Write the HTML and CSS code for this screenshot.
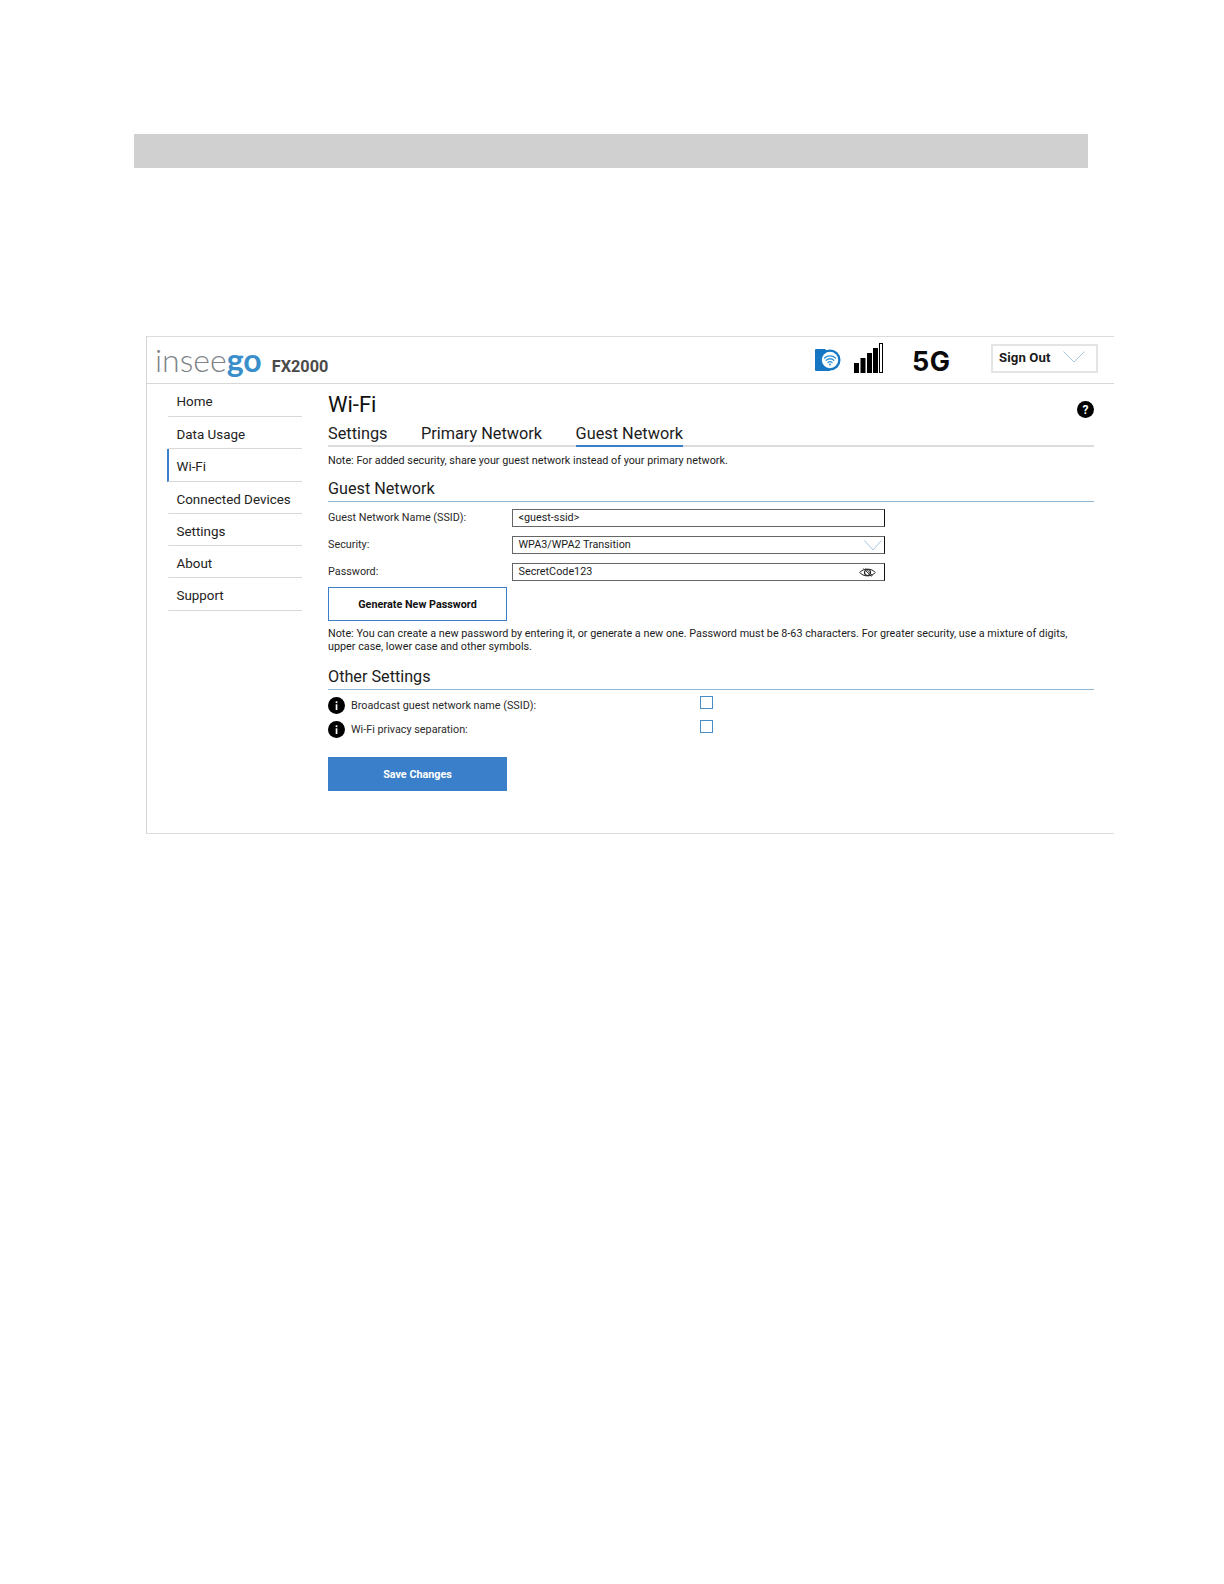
FILE: index.html
```html
<!DOCTYPE html>
<html lang="en">
<head>
<meta charset="utf-8">
<title>Wi-Fi Guest Network</title>
<link rel="stylesheet" href="styles.css">
</head>
<body>
<div class="page">
  <div class="graybar"></div>
  <div class="panel">
    <header class="topbar">
      <div class="logo"><span class="logo-a">insee</span><span class="logo-b">go</span></div>
      <div class="model">FX2000</div>
      <div class="status">
        <svg class="ic-wifi" width="27" height="24" viewBox="0 0 27 24">
          <path d="M0 2a1 1 0 0 1 1-1h9l2 2h3v20H1a1 1 0 0 1-1-1z" fill="#1577c4"/>
          <circle cx="15" cy="12" r="10.5" fill="#1577c4"/>
          <circle cx="15" cy="12" r="8.2" fill="#fff"/>
          <g fill="none" stroke="#2a8fd8" stroke-width="1.3" stroke-linecap="round">
            <path d="M9.5 10a8 8 0 0 1 11 0"/>
            <path d="M11.2 12.3a5.4 5.4 0 0 1 7.6 0"/>
            <path d="M13 14.5a2.8 2.8 0 0 1 4 0"/>
          </g>
          <circle cx="15" cy="16.6" r="1" fill="#2a8fd8"/>
        </svg>
        <svg class="ic-signal" width="29" height="30" viewBox="0 0 29 30">
          <rect x="0" y="20" width="5" height="10" fill="#000"/>
          <rect x="6.5" y="15" width="5" height="15" fill="#000"/>
          <rect x="13" y="10" width="5" height="20" fill="#000"/>
          <rect x="19" y="5" width="5" height="25" fill="#000"/>
          <rect x="25.500" y="0.500" width="3" height="29" fill="#fff" stroke="#000"/>
        </svg>
        <div class="net">5G</div>
        <div class="signout"><span>Sign Out</span>
          <svg width="22" height="12" viewBox="0 0 22 12"><path d="M0.5 0.5 11 11 21.5 0.5" fill="none" stroke="#a9c6dc"/></svg>
        </div>
      </div>
    </header>
    <div class="body">
      <nav class="nav">
        <a class="nav-item">Home</a>
        <a class="nav-item">Data Usage</a>
        <a class="nav-item active">Wi-Fi</a>
        <a class="nav-item">Connected Devices</a>
        <a class="nav-item">Settings</a>
        <a class="nav-item">About</a>
        <a class="nav-item">Support</a>
      </nav>
      <main class="main">
        <div class="title-row">
          <h1 class="title">Wi-Fi</h1>
          <svg class="help" width="17" height="17" viewBox="0 0 17 17"><circle cx="8.5" cy="8.5" r="8.5" fill="#000"/><text x="8.5" y="12.6" text-anchor="middle" class="help-q">?</text></svg>
        </div>
        <div class="tabs">
          <span class="tab">Settings</span>
          <span class="tab">Primary Network</span>
          <span class="tab current">Guest Network</span>
        </div>
        <p class="note first">Note: For added security, share your guest network instead of your primary network.</p>
        <h2 class="section">Guest Network</h2>
        <div class="form">
          <label class="lbl">Guest Network Name (SSID):</label>
          <div class="field">&lt;guest-ssid&gt;</div>
          <label class="lbl">Security:</label>
          <div class="field select">WPA3/WPA2 Transition
            <svg width="18" height="11" viewBox="0 0 18 11"><path d="M0.5 0.5 9 10 17.5 0.5" fill="none" stroke="#a9c6dc"/></svg>
          </div>
          <label class="lbl">Password:</label>
          <div class="field secret">SecretCode123
            <svg width="17" height="11" viewBox="0 0 17 11"><path d="M0.8 5.500C4 1 13 1 16.200 5.500 13 10 4 10 0.800 5.500Z" fill="none" stroke="#222" stroke-width="1"/><circle cx="8.500" cy="5.500" r="3" fill="none" stroke="#222" stroke-width="1.200"/><path d="M4.500 1.500 12.500 9.500M6 1.500 13.500 8.500" stroke="#333" stroke-width="0.900"/></svg>
          </div>
        </div>
        <button class="btn outline">Generate New Password</button>
        <p class="note second">Note: You can create a new password by entering it, or generate a new one. Password must be 8-63 characters. For greater security, use a mixture of digits, upper case, lower case and other symbols.</p>
        <h2 class="section">Other Settings</h2>
        <div class="opts">
          <div class="opt">
            <svg class="info" width="17" height="17" viewBox="0 0 17 17"><circle cx="8.500" cy="8.500" r="8.500" fill="#000"/><rect x="7.700" y="7.300" width="1.700" height="5.700" fill="#fff"/><rect x="7.700" y="4.300" width="1.700" height="1.800" fill="#fff"/></svg>
            <span class="opt-label">Broadcast guest network name (SSID):</span>
            <span class="check"></span>
          </div>
          <div class="opt">
            <svg class="info" width="17" height="17" viewBox="0 0 17 17"><circle cx="8.500" cy="8.500" r="8.500" fill="#000"/><rect x="7.700" y="7.300" width="1.700" height="5.700" fill="#fff"/><rect x="7.700" y="4.300" width="1.700" height="1.800" fill="#fff"/></svg>
            <span class="opt-label">Wi-Fi privacy separation:</span>
            <span class="check"></span>
          </div>
        </div>
        <button class="btn solid">Save Changes</button>
      </main>
    </div>
  </div>
</div>
</body>
</html>
```
FILE: styles.css
```css
* { box-sizing: border-box; }
html, body { margin: 0; padding: 0; background: #fff; }
body { font-family: Roboto, "Liberation Sans", sans-serif; color: #111; height: 1584px; overflow: hidden; }
.page { padding-top: 134px; }
.graybar { margin-left: 134px; width: 954px; height: 34px; background: #d0d0d0; }
.panel { margin: 168px 0 0 146px; width: 968px; height: 498px; border-left: 1px solid #d4d4d4; border-top: 1px solid #dcdcdc; border-bottom: 1px solid #dcdcdc; }
.topbar { height: 47px; border-bottom: 1px solid #d8d8d8; display: flex; align-items: flex-start; padding-left: 8px; }
.logo { font-family: Lato, sans-serif; font-size: 32px; line-height: 45px; height: 46px; }
.logo-a { color: #7f8387; font-weight: 300; }
.logo-b { color: #3a8fcb; font-weight: 700; }
.model { margin: 20px 0 0 10px; font-size: 16.300px; line-height: 20px; font-weight: 700; color: #4a4a4a; }
.status { margin-left: auto; display: flex; align-items: flex-start; padding-right: 16px; }
.ic-wifi { margin-top: 11px; }
.ic-signal { margin: 6px 0 0 12px; }
.net { margin: 11px 0 0 29px; font-family: Inter, sans-serif; width: 44px; font-size: 27px; line-height: 28px; font-weight: 700; color: #0a0a0a; letter-spacing: 0.500px; }
.signout { margin: 7px 0 0 35px; width: 107px; height: 29px; border: 2px solid #e4e4e4; display: flex; align-items: center; justify-content: space-between; padding: 0 11px 3px 6px; font-size: 13.200px; font-weight: 700; letter-spacing: 0.100px; color: #1a1a1a; }
.signout svg { margin-bottom: 1px; }
.body { display: flex; }
.nav { width: 135px; margin: 0 0 0 20px; display: flex; flex-direction: column; }
.nav-item { height: 32.300px; border-bottom: 1px solid #d8d8d8; border-left: 2px solid transparent; padding: 10px 0 0 7.500px; font-size: 13.400px; line-height: 16px; color: #222; }
.nav-item:first-child { height: 33px; }
.nav-item.active { border-left-color: #3a7fc9; }
.main { margin-left: 26px; width: 766px; }
.title-row { display: flex; justify-content: space-between; height: 36px; }
.title { margin: 7px 0 0; font-size: 22px; line-height: 28px; font-weight: 400; color: #111; }
.help { margin-top: 17px; }
.help-q { font: 700 12px Roboto, sans-serif; fill: #fff; }
.tabs { height: 26px; display: flex; gap: 33.500px; border-bottom: 2px solid #dcdcdc; margin-top: 1px; }
.tab { font-size: 16.300px; line-height: 26px; height: 26px; color: #1c1c1c; }
.tab.current { border-bottom: 2px solid #3a7fc9; }
.note { margin: 0; font-size: 10.800px; line-height: 13px; color: #1c1c1c; }
.note.first { margin-top: 7px; }
.section { margin: 0; font-size: 16.200px; font-weight: 400; line-height: 24px; color: #1c1c1c; border-bottom: 1px solid #8db6d6; height: 25px; }
.note.first + .section { margin-top: 10px; }
.form { display: grid; grid-template-columns: 184px 373px; grid-auto-rows: 18px; row-gap: 9px; margin-top: 7px; align-items: center; }
.lbl { font-size: 10.800px; line-height: 18px; color: #2a2a2a; }
.field { height: 18px; border: 1px solid #666; border-right-color: #111; font-size: 10.800px; line-height: 16px; padding: 0 8px 0 5.500px; display: flex; align-items: center; justify-content: space-between; color: #1c1c1c; }
.field.select { padding-right: 2px; }
.btn { display: block; width: 179px; height: 34px; font: 700 10.800px Roboto, sans-serif; padding: 0; border-radius: 0; }
.btn.outline { margin-top: 6px; background: #fff; color: #111; border: 1px solid #3a7fc9; }
.btn.solid { margin-top: 19px; background: #3a7fc9; color: #fff; border: 0; }
.note.second { margin-top: 6px; }
.note.second + .section { margin-top: 12px; }
.opts { display: flex; flex-direction: column; gap: 7px; margin-top: 7px; }
.opt { display: flex; align-items: center; height: 17px; }
.info { flex: none; }
.opt-label { margin-left: 6px; font-size: 10.800px; color: #2a2a2a; width: 349px; }
.check { width: 13px; height: 13px; border: 1px solid #4a8cc4; margin-top: -6px; }
```
